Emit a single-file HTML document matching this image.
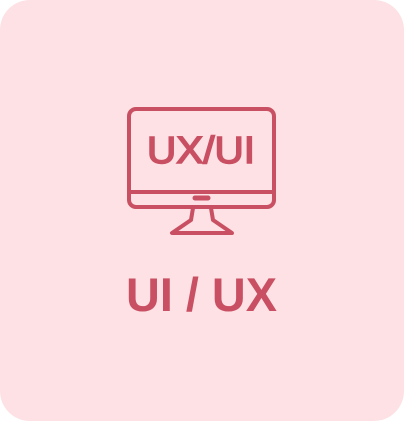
<!DOCTYPE html>
<html><head><style>
html,body{margin:0;padding:0;background:#fff;}
.card{position:absolute;left:0;top:0;width:404px;height:421px;background:#fde1e4;border-radius:30px;}
svg{position:absolute;left:0;top:0;}
</style></head><body>
<div class="card"></div>
<svg width="404" height="421" viewBox="0 0 404 421">
<g fill="none" stroke="#c94f62" stroke-width="4" stroke-linejoin="round" stroke-linecap="round">
<rect x="129" y="109" width="145" height="98" rx="7"/>
<line x1="129" y1="192" x2="274" y2="192"/>
<line x1="195" y1="198" x2="208" y2="198" stroke-width="5"/>
<path d="M193 208 L191 220 L172 233 L232 233 L213 220 L211 208"/>
</g>
<text x="147" y="163" font-family="Liberation Sans, sans-serif" font-size="38" fill="#c94f62" stroke="#c94f62" stroke-width="1.6" textLength="108" lengthAdjust="spacingAndGlyphs">UX/UI</text>
<text x="126" y="311" font-family="Liberation Sans, sans-serif" font-weight="bold" font-size="47" fill="#c94f62" textLength="151" lengthAdjust="spacingAndGlyphs">UI / UX</text>
</svg>
</body></html>
